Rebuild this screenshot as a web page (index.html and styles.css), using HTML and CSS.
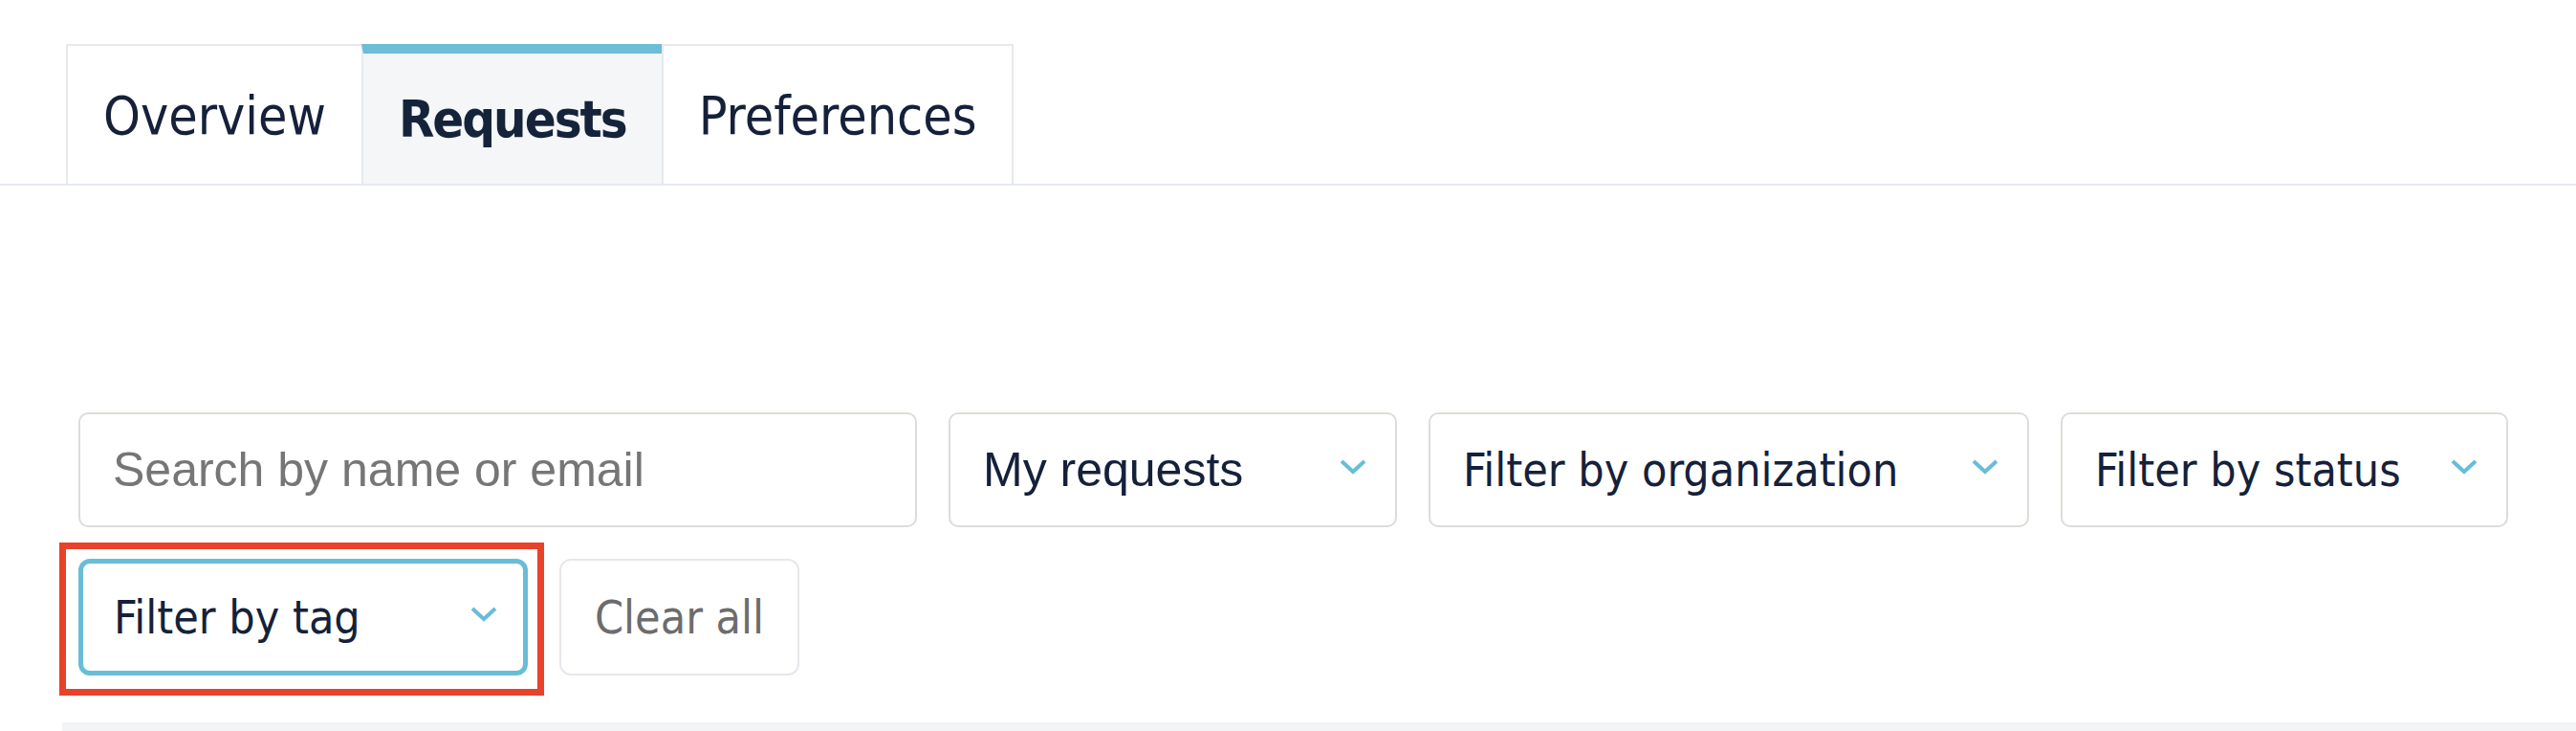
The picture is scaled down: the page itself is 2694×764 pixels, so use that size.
FILE: index.html
```html
<!DOCTYPE html>
<html lang="en">
<head>
<meta charset="utf-8">
<title>Requests</title>
<link rel="stylesheet" href="styles.css">
</head>
<body>
<div class="page">
  <nav class="tabs">
    <a class="tab">Overview</a>
    <a class="tab tab-active">Requests</a>
    <a class="tab">Preferences</a>
  </nav>

  <div class="filters">
    <input class="field search" type="text" placeholder="Search by name or email">
    <div class="field select select-arial w-my">
      <span>My requests</span>
      <svg class="chev" viewBox="0 0 28 16" width="28" height="16"><polyline points="2,2 14,13 26,2" fill="none" stroke="#68bdd7" stroke-width="4"/></svg>
    </div>
    <div class="field select w-org">
      <span>Filter by organization</span>
      <svg class="chev" viewBox="0 0 28 16" width="28" height="16"><polyline points="2,2 14,13 26,2" fill="none" stroke="#68bdd7" stroke-width="4"/></svg>
    </div>
    <div class="field select w-status">
      <span>Filter by status</span>
      <svg class="chev" viewBox="0 0 28 16" width="28" height="16"><polyline points="2,2 14,13 26,2" fill="none" stroke="#68bdd7" stroke-width="4"/></svg>
    </div>
    <div class="highlight">
      <div class="field select focused w-tag">
        <span>Filter by tag</span>
        <svg class="chev" viewBox="0 0 28 16" width="28" height="16"><polyline points="2,2 14,13 26,2" fill="none" stroke="#68bdd7" stroke-width="4"/></svg>
      </div>
    </div>
    <button class="clear">Clear all</button>
  </div>

  <div class="table-top"></div>
</div>
</body>
</html>
```

FILE: styles.css
```css
* { box-sizing: border-box; }

html, body {
  margin: 0;
  padding: 0;
  background: #ffffff;
}

body {
  font-family: "DejaVu Sans Condensed", "DejaVu Sans", sans-serif;
  font-stretch: condensed;
  color: #15213a;
  overflow: hidden;
}

.page {
  width: 2694px;
  height: 764px;
}

.tabs {
  display: flex;
  padding-top: 46px;
  padding-left: 69px;
  border-bottom: 2px solid #e6e9ee;
}

.tab {
  display: flex;
  align-items: center;
  height: 146px;
  padding: 2px 37px 0;
  border: 2px solid #e6e9ee;
  border-bottom: none;
  margin-right: -2px;
  background: #ffffff;
  font-size: 55px;
  color: #15213a;
  text-decoration: none;
}

.tab-active {
  background: #f4f6f8;
  border-top: 10px solid #6cbdd8;
  padding-top: 0;
  font-weight: bold;
  font-size: 54px;
  letter-spacing: -2px;
  color: #15233a;
}

.filters {
  display: flex;
  flex-wrap: wrap;
  column-gap: 33px;
  row-gap: 33px;
  width: 2640px;
  margin-top: 237px;
  padding-left: 82px;
}

.field {
  height: 120px;
  border: 2px solid #dcdcd8;
  border-radius: 10px;
  background: #ffffff;
}

.search {
  width: 877px;
  padding: 0 34px;
  font-family: "Liberation Sans", Arial, sans-serif;
  font-stretch: normal;
  font-size: 50px;
  color: #15213a;
  outline: none;
}

.search::placeholder {
  color: #767676;
}

.select {
  display: flex;
  align-items: center;
  justify-content: space-between;
  padding: 0 30px 0 34px;
  font-size: 48px;
  color: #15213a;
}

.select-arial {
  font-family: "Liberation Sans", Arial, sans-serif;
  font-stretch: normal;
  font-size: 50px;
}

.chev {
  flex: none;
  margin-bottom: 6px;
}

.w-my { width: 469px; }
.w-org { width: 628px; }
.w-status { width: 468px; }
.w-tag { width: 470px; }

.focused {
  height: 122px;
  border: 5px solid #68bdd7;
  border-radius: 12px;
  padding-left: 32px;
  padding-right: 27px;
}

.highlight {
  position: relative;
}

.highlight::after {
  content: "";
  position: absolute;
  top: -17px;
  left: -20px;
  right: -17px;
  bottom: -21px;
  border: 7px solid #e8422a;
  pointer-events: none;
}

.clear {
  width: 251px;
  height: 122px;
  border: 2px solid #e5e8ec;
  border-radius: 12px;
  background: #ffffff;
  font-family: "DejaVu Sans Condensed", "DejaVu Sans", sans-serif;
  font-stretch: condensed;
  font-size: 48px;
  color: #6c6c6c;
  padding: 0;
}

.table-top {
  margin-top: 49px;
  margin-left: 65px;
  height: 20px;
  background: #f3f4f6;
}
```
